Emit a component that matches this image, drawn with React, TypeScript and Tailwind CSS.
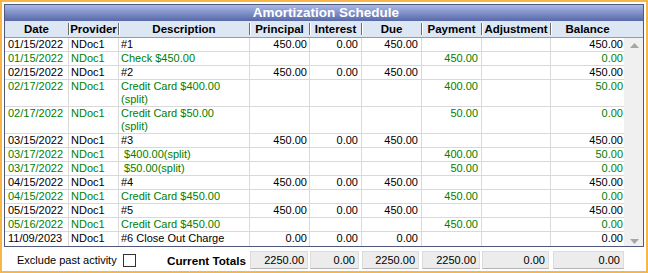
import React from 'react';

type Row = {
  date: string;
  desc: string[];
  principal?: string;
  interest?: string;
  due?: string;
  payment?: string;
  adjustment?: string;
  balance: string;
  green?: boolean;
};

const ROWS: Row[] = [
  { date: '01/15/2022', desc: ['#1'], principal: '450.00', interest: '0.00', due: '450.00', balance: '450.00' },
  { date: '01/15/2022', desc: ['Check $450.00'], payment: '450.00', balance: '0.00', green: true },
  { date: '02/15/2022', desc: ['#2'], principal: '450.00', interest: '0.00', due: '450.00', balance: '450.00' },
  { date: '02/17/2022', desc: ['Credit Card $400.00', '(split)'], payment: '400.00', balance: '50.00', green: true },
  { date: '02/17/2022', desc: ['Credit Card $50.00', '(split)'], payment: '50.00', balance: '0.00', green: true },
  { date: '03/15/2022', desc: ['#3'], principal: '450.00', interest: '0.00', due: '450.00', balance: '450.00' },
  { date: '03/17/2022', desc: [' $400.00(split)'], payment: '400.00', balance: '50.00', green: true },
  { date: '03/17/2022', desc: [' $50.00(split)'], payment: '50.00', balance: '0.00', green: true },
  { date: '04/15/2022', desc: ['#4'], principal: '450.00', interest: '0.00', due: '450.00', balance: '450.00' },
  { date: '04/15/2022', desc: ['Credit Card $450.00'], payment: '450.00', balance: '0.00', green: true },
  { date: '05/15/2022', desc: ['#5'], principal: '450.00', interest: '0.00', due: '450.00', balance: '450.00' },
  { date: '05/16/2022', desc: ['Credit Card $450.00'], payment: '450.00', balance: '0.00', green: true },
  { date: '11/09/2023', desc: ['#6 Close Out Charge'], principal: '0.00', interest: '0.00', due: '0.00', balance: '0.00' },
];

const HEADERS = ['Provider', 'Description', 'Principal', 'Interest', 'Due', 'Payment', 'Adjustment', 'Balance'];

const TOTALS = [
  { v: '2250.00', cls: 'mx-[1px]' },
  { v: '0.00', cls: 'ml-[1px] mr-[2px]' },
  { v: '2250.00', cls: 'ml-[1px] mr-[2px]' },
  { v: '2250.00', cls: 'mx-[1px]' },
  { v: '0.00', cls: 'mx-[1px]' },
  { v: '0.00', cls: 'ml-[3px]' },
];

function Arrow({ down }: { down?: boolean }) {
  return (
    <svg width="9" height="5" viewBox="0 0 9 5" className="ml-[6px]">
      <polygon points={down ? '0,0 9,0 4.5,5' : '4.5,0 9,5 0,5'} fill="#a6a6a6" />
    </svg>
  );
}

export default function App() {
  return (
    <div className="h-[273px] w-[648px] border-2 border-[#f8b648] bg-white p-[2px] font-['Liberation_Sans',Arial,sans-serif] text-[11px] leading-[13px] text-black">
      <div className="flex flex-col border border-[#4f5a7a]">
        <div className="flex h-[16px] items-center justify-center bg-linear-to-b from-[#aab9e7] to-[#5768a8] pl-[4px] text-[13.5px] font-bold leading-[16px] text-white">
          Amortization Schedule
        </div>

        <div className="grid h-[17px] grid-cols-[63px_50px_131px_60px_52px_60px_60px_69px_74px_19px] border-b border-[#9a9a9a] bg-[#dde6f3] text-[11.5px] font-bold">
          <div className="flex items-center justify-center">Date</div>
          {HEADERS.map((h) => (
            <div key={h} className="flex items-center">
              <span className="h-[12px] w-px bg-[#6d6d6d] shadow-[1px_0_0_#ffffff]" />
              <span className="flex-1 text-center">{h}</span>
            </div>
          ))}
          <div />
        </div>

        <div className="flex">
          <div className="flex w-[619px] flex-col">
            {ROWS.map((r, i) => {
              const color = r.green ? 'text-[#008000]' : 'text-black';
              const line = i < ROWS.length - 1 ? 'border-b border-[#d9d9d9]' : '';
              return (
                <div
                  key={i}
                  className={`grid grid-cols-[63px_50px_131px_60px_52px_60px_60px_69px_74px] ${line} ${color} ${r.desc.length > 1 ? 'h-[27px]' : 'h-[14px]'}`}
                >
                  <div className="pl-[3px]">{r.date}</div>
                  <div className="border-l border-[#d9d9d9] pl-[2px]">NDoc1</div>
                  <div className="whitespace-pre border-l border-[#d9d9d9] pl-[2px]">
                    {r.desc.map((d) => (
                      <div key={d}>{d}</div>
                    ))}
                  </div>
                  <div className="border-l border-[#d9d9d9] pr-[2px] text-right">{r.principal}</div>
                  <div className="border-l border-[#d9d9d9] pr-[3px] text-right">{r.interest}</div>
                  <div className="border-l border-[#d9d9d9] pr-[3px] text-right">{r.due}</div>
                  <div className="border-l border-[#d9d9d9] pr-[3px] text-right">{r.payment}</div>
                  <div className="border-l border-[#d9d9d9] pr-[3px] text-right">{r.adjustment}</div>
                  <div className="border-l border-[#d9d9d9] pr-[1px] text-right">{r.balance}</div>
                </div>
              );
            })}
          </div>
          <div className="flex w-[19px] flex-col justify-between bg-[#f0f0f0] pt-[5px] pb-[2px]">
            <Arrow />
            <Arrow down />
          </div>
        </div>
      </div>

      <div className="grid grid-cols-[244px_60px_52px_60px_60px_69px_74px] pt-[4px] pl-[1px]">
        <div className="flex h-[18px] items-center pl-[12px]">
          <span>Exclude past activity</span>
          <span className="ml-[6px] h-[13px] w-[13px] border border-[#333333] bg-white" />
          <span className="ml-auto pr-[3px] text-[11.7px] font-bold">Current Totals</span>
        </div>
        {TOTALS.map((t, i) => (
          <div
            key={i}
            className={`flex h-[18px] items-center justify-end border border-[#dcdcdc] border-b-[#b5b5b5] bg-[#ececec] pr-[3px] ${t.cls}`}
          >
            {t.v}
          </div>
        ))}
      </div>
    </div>
  );
}
